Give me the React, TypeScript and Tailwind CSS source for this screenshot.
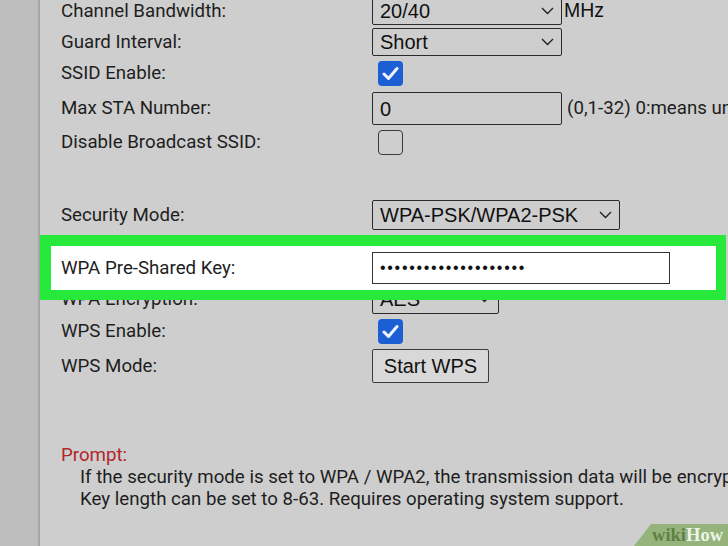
import React from 'react';

const labelFont = { fontFamily: 'Roboto, "Liberation Sans", sans-serif' };
const ctrlFont = { fontFamily: '"Liberation Sans", Arial, sans-serif' };

const Chevron: React.FC = () => (
    <svg width="13" height="8" viewBox="0 0 13 8" className="shrink-0">
        <polyline points="1,1 6.5,6.5 12,1" fill="none" stroke="#222" strokeWidth="1.4" />
    </svg>
);

const Select: React.FC<{ value: string; width: string; height: string }> = ({ value, width, height }) => (
    <div
        className={`${width} ${height} flex items-center justify-between pl-[7px] pr-[7px] border-[1.5px] border-[#2a2a2a] rounded-[2px] text-[20px] text-[#111] leading-none`}
        style={ctrlFont}
    >
        <span>{value}</span>
        <Chevron />
    </div>
);

const Checkbox: React.FC<{ checked?: boolean }> = ({ checked }) =>
    checked ? (
        <div className="ml-[6px] w-[25px] h-[25px] rounded-[4px] bg-[#1c5fd4] flex items-center justify-center">
            <svg width="17" height="15" viewBox="0 0 17 15">
                <polyline points="2,8 6.5,12.5 15,2.5" fill="none" stroke="#eef3ff" strokeWidth="3" strokeLinecap="round" strokeLinejoin="round" />
            </svg>
        </div>
    ) : (
        <div className="ml-[6px] w-[25px] h-[25px] rounded-[4px] border-[1.5px] border-[#3a3a3a]" />
    );

const Row: React.FC<{ label: string; className: string; children?: React.ReactNode }> = ({ label, className, children }) => (
    <div className={`flex items-center ${className}`}>
        <div className="w-[311px] shrink-0 text-[18.7px] text-[#1e1e1e] whitespace-nowrap" style={labelFont}>
            {label}
        </div>
        {children}
    </div>
);

const App: React.FC = () => {
    return (
        <div className="relative w-[728px] h-[546px] overflow-hidden flex bg-[#cecece]">
            {/* left frame strip */}
            <div className="w-[40px] shrink-0 bg-[#bebebe] border-r-2 border-[#a6a6a6]" />

            <div className="flex-1 flex flex-col pl-[21px] bg-[#cecece]">
                <Row label="Channel Bandwidth:" className="mt-[-3px] h-[28px]">
                    <Select value="20/40" width="w-[190px]" height="h-[28px]" />
                    <span className="ml-[2px] text-[19.5px] text-[#111]" style={ctrlFont}>MHz</span>
                </Row>
                <Row label="Guard Interval:" className="mt-[3px] h-[28px]">
                    <Select value="Short" width="w-[190px]" height="h-[28px]" />
                </Row>
                <Row label="SSID Enable:" className="mt-[3px] h-[28px]">
                    <Checkbox checked />
                </Row>
                <Row label="Max STA Number:" className="mt-[5px] h-[33px]">
                    <div
                        className="w-[190px] h-[33px] flex items-center pl-[7px] border-[1.5px] border-[#2a2a2a] rounded-[2px] text-[20px] text-[#111]"
                        style={ctrlFont}
                    >
                        0
                    </div>
                    <span className="ml-[5px] text-[18.7px] text-[#1e1e1e] whitespace-nowrap" style={labelFont}>
                        (0,1-32) 0:means unlimited
                    </span>
                </Row>
                <Row label="Disable Broadcast SSID:" className="mt-[2px] h-[31px]">
                    <Checkbox />
                </Row>

                <Row label="Security Mode:" className="mt-[42px] h-[30px]">
                    <Select value="WPA-PSK/WPA2-PSK" width="w-[248px]" height="h-[30px]" />
                </Row>
                <Row label="WPA Pre-Shared Key:" className="relative z-20 mt-[22px] h-[32px]">
                    <div className="w-[298px] h-[32px] flex items-center pl-[7px] bg-white border-[1.5px] border-[#333]">
                        <span className="text-[16px] text-[#111] leading-none tracking-[1.7px]" style={ctrlFont}>
                            ••••••••••••••••••••
                        </span>
                    </div>
                </Row>
                <Row label="WPA Encryption:" className="h-[30px]">
                    <Select value="AES" width="w-[127px]" height="h-[30px]" />
                </Row>
                <Row label="WPS Enable:" className="mt-[4px] h-[27px]">
                    <Checkbox checked />
                </Row>
                <Row label="WPS Mode:" className="mt-[4px] h-[34px]">
                    <button
                        className="w-[117px] h-[34px] bg-[#d8d8d8] border-[1.5px] border-[#3c3c3c] rounded-[2px] text-[20px] text-[#111]"
                        style={ctrlFont}
                    >
                        Start WPS
                    </button>
                </Row>

                <div className="mt-[61px] text-[18.7px] leading-[22px] whitespace-nowrap" style={labelFont}>
                    <div className="text-[#b2262c]">Prompt:</div>
                    <div className="pl-[19px] text-[#1e1e1e]">
                        If the security mode is set to WPA / WPA2, the transmission data will be encrypted.
                    </div>
                    <div className="pl-[19px] text-[#1e1e1e]">
                        Key length can be set to 8-63. Requires operating system support.
                    </div>
                </div>
            </div>

            {/* green highlight annotation */}
            <div className="absolute z-10 left-[40px] top-[235px] w-[686px] h-[65px] bg-white border-[11px] border-b-[10px] border-r-[10px] border-[#27e93b]" />

            {/* wikiHow badge */}
            <div className="absolute right-0 bottom-0 w-[94px] h-[22px] bg-[#94b47c] [clip-path:polygon(17px_0,100%_0,100%_100%,0_100%)] flex items-center justify-end pr-[5px]">
                <span className="text-[18.5px] font-bold leading-none" style={{ fontFamily: '"Liberation Serif", "DejaVu Serif", serif' }}>
                    <span className="text-[#5f7f45]">wiki</span>
                    <span className="text-[#eef3e8]">How</span>
                </span>
            </div>
        </div>
    );
};

export default App;
